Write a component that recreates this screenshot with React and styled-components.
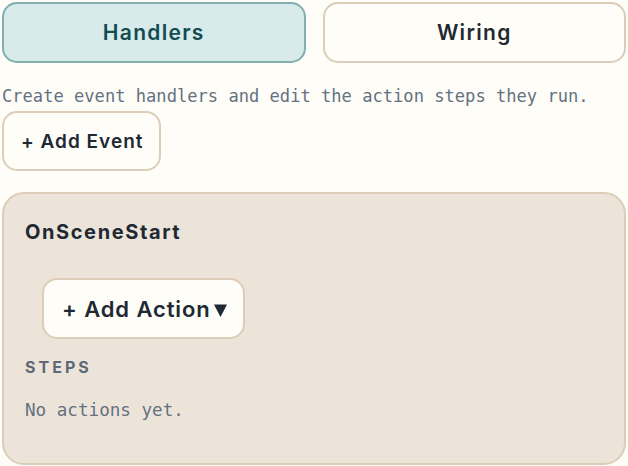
import styled, { createGlobalStyle } from "styled-components"
import { useState } from "react"

const GlobalStyle = createGlobalStyle`
    html, body {
        margin: 0;
        padding: 0;
        background: #fefdf8;
    }
    body {
        font-family: "Inter", "Liberation Sans", sans-serif;
        color: #1f2933;
    }
`

const App = () => {
    const [tab, setTab] = useState("handlers")

    return (
        <>
            <GlobalStyle />
            <Page>
                <Tabs>
                    <Tab active={tab === "handlers"} onClick={() => setTab("handlers")}>Handlers</Tab>
                    <Tab active={tab === "wiring"} onClick={() => setTab("wiring")}>Wiring</Tab>
                </Tabs>
                <Description>Create event handlers and edit the action steps they run.</Description>
                <AddEvent>+ Add Event</AddEvent>
                <Panel>
                    <Title>OnSceneStart</Title>
                    <ActionRow>
                        <AddAction>
                            + Add Action
                            <Caret viewBox="0 0 12 12">
                                <path d="M0 0.5 H12 L6 12 Z" fill="currentColor" />
                            </Caret>
                        </AddAction>
                    </ActionRow>
                    <SectionLabel>Steps</SectionLabel>
                    <Empty>No actions yet.</Empty>
                </Panel>
            </Page>
        </>
    )
}

const Page = styled.div`
    display: flex;
    flex-direction: column;
    align-items: flex-start;
    padding: 2px 2px 0 2px;
`

const Tabs = styled.div`
    display: grid;
    grid-template-columns: 1fr 1fr;
    gap: 17px;
    width: 100%;
`

const Tab = styled.button`
    height: 61px;
    border-radius: 15px;
    border: 2px solid ${(p) => (p.active ? "#80aeb1" : "#dccdb8")};
    background: ${(p) => (p.active ? "#d8ebea" : "#fefdf8")};
    color: ${(p) => (p.active ? "#124c52" : "#1f2933")};
    font-family: "Inter", sans-serif;
    font-size: 21px;
    font-weight: 600;
    letter-spacing: 1.3px;
    cursor: pointer;
`

const Description = styled.p`
    margin: 20px 0 0;
    font-family: "DejaVu Sans Mono", monospace;
    font-size: 17.1px;
    line-height: 26px;
    color: #647181;
`

const Button = styled.button`
    display: inline-flex;
    align-items: center;
    border: 2px solid #dccdb8;
    background: #fefdf8;
    color: #1f2933;
    font-family: "Inter", sans-serif;
    font-weight: 600;
    cursor: pointer;
`

const AddEvent = styled(Button)`
    margin-top: 2px;
    height: 60px;
    padding: 0 16px 0 17px;
    border-radius: 15px;
    font-size: 19px;
    letter-spacing: 1px;
`

const Panel = styled.section`
    box-sizing: border-box;
    width: 100%;
    margin-top: 21px;
    padding: 24px 21px 41px;
    border: 2px solid #dccdb8;
    border-radius: 22px;
    background: #ede4d9;
`

const Title = styled.h3`
    margin: 0;
    font-size: 20px;
    line-height: 28px;
    font-weight: 700;
    letter-spacing: 1.6px;
`

const ActionRow = styled.div`
    display: flex;
    padding: 32px 0 0 17px;
`

const AddAction = styled(Button)`
    height: 61px;
    padding: 0 16px 0 18px;
    border-radius: 15px;
    font-size: 22px;
    letter-spacing: 0.9px;
`

const Caret = styled.svg`
    width: 13px;
    height: 13px;
    margin: 3px 0 0 3px;
`

const SectionLabel = styled.div`
    margin-top: 18px;
    font-size: 16px;
    line-height: 20px;
    font-weight: 700;
    letter-spacing: 3px;
    text-transform: uppercase;
    color: #5d6a78;
`

const Empty = styled.p`
    margin: 21px 0 0;
    font-family: "DejaVu Sans Mono", monospace;
    font-size: 17.6px;
    line-height: 24px;
    color: #647181;
`

export default App
